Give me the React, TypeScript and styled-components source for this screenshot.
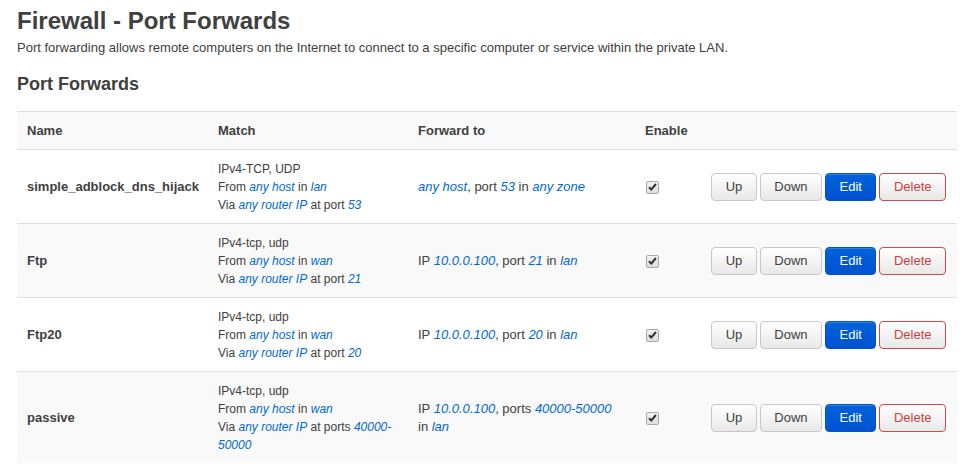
import React from "react";
import styled, { createGlobalStyle } from "styled-components";

const GlobalStyle = createGlobalStyle`
  html, body { margin: 0; padding: 0; background: #fff; }
  body {
    font-family: "Liberation Sans", Arial, Helvetica, sans-serif;
    color: #404040;
    font-size: 13px;
  }
`;

const Page = styled.div`
  width: 940px;
  padding: 0 10px 0 17px;
`;

const Title = styled.h2`
  margin: 0;
  padding-top: 6px;
  font-size: 24px;
  line-height: 30px;
  font-weight: bold;
  color: #404040;
`;

const Description = styled.p`
  margin: 0;
  padding-top: 3px;
  font-size: 13px;
  line-height: 18px;
`;

const Section = styled.h3`
  margin: 0;
  padding-top: 15px;
  font-size: 18px;
  line-height: 24px;
  font-weight: bold;
  color: #404040;
`;

const Table = styled.div`
  margin-top: 15px;
  display: flex;
  flex-direction: column;
`;

const Row = styled.div<{ $shade?: boolean }>`
  display: grid;
  grid-template-columns: 191px 200px 227px 65px 1fr;
  border-top: 1px solid #ddd;
  background: ${(p) => (p.$shade ? "#f9f9f9" : "#fff")};
`;

const HeadCell = styled.div`
  padding: 10px 10px 9px;
  font-size: 13px;
  line-height: 18px;
  font-weight: bold;
  color: #404040;
`;

const Cell = styled.div<{ $narrow?: boolean; $pr?: number }>`
  padding: 10px ${(p) => p.$pr ?? 10}px 9px 10px;
  display: flex;
  align-items: center;
  font-size: ${(p) => (p.$narrow ? "12px" : "13px")};
  line-height: 18px;
  color: #404040;
`;

const NameCell = styled(Cell)`
  font-weight: bold;
`;

const Lines = styled.div`
  display: flex;
  flex-direction: column;
`;

const Val = styled.i`
  color: #0069d6;
`;

const Check = styled.span`
  width: 11px;
  height: 11px;
  margin-left: 1px;
  border: 1px solid #a9a9a9;
  border-radius: 2px;
  background: linear-gradient(#f2f2f2, #dedede);
  display: flex;
  align-items: center;
  justify-content: center;
`;

const Actions = styled.div`
  padding: 0 11px 0 10px;
  display: flex;
  align-items: center;
  justify-content: flex-end;
  gap: 3px;
`;

type Kind = "plain" | "edit" | "remove";

const Button = styled.button<{ $kind: Kind }>`
  height: 28px;
  padding: 0 13.5px;
  border-radius: 4px;
  font-family: "Liberation Sans", Arial, sans-serif;
  font-size: 13px;
  line-height: 26px;
  cursor: pointer;
  border: 1px solid
    ${(p) =>
      p.$kind === "edit" ? "#0054cc" : p.$kind === "remove" ? "#cf4a4a" : "#c8c8c8"};
  color: ${(p) =>
    p.$kind === "edit" ? "#fff" : p.$kind === "remove" ? "#cf3e3e" : "#404040"};
  background: ${(p) =>
    p.$kind === "edit"
      ? "linear-gradient(#0062da, #0052d0)"
      : "linear-gradient(#ffffff, #e8e8e8)"};
  box-shadow: inset 0 1px 0 rgba(255, 255, 255, 0.2);
`;

const CheckMark = () => (
  <Check>
    <svg width="9" height="8" viewBox="0 0 9 8">
      <path d="M1 4.2 L3.3 6.5 L8 1" fill="none" stroke="#333" strokeWidth="2" />
    </svg>
  </Check>
);

type Entry = {
  name: string;
  proto: string;
  src: string;
  port: string;
  plural?: boolean;
  forward: React.ReactNode;
  pr?: number;
};

const entries: Entry[] = [
  {
    name: "simple_adblock_dns_hijack",
    proto: "IPv4-TCP, UDP",
    src: "lan",
    port: "53",
    forward: (
      <span>
        <Val>any host</Val>, port <Val>53</Val> in <Val>any zone</Val>
      </span>
    ),
  },
  {
    name: "Ftp",
    proto: "IPv4-tcp, udp",
    src: "wan",
    port: "21",
    forward: (
      <span>
        IP <Val>10.0.0.100</Val>, port <Val>21</Val> in <Val>lan</Val>
      </span>
    ),
  },
  {
    name: "Ftp20",
    proto: "IPv4-tcp, udp",
    src: "wan",
    port: "20",
    forward: (
      <span>
        IP <Val>10.0.0.100</Val>, port <Val>20</Val> in <Val>lan</Val>
      </span>
    ),
  },
  {
    name: "passive",
    proto: "IPv4-tcp, udp",
    src: "wan",
    port: "40000-50000",
    plural: true,
    pr: 13,
    forward: (
      <span>
        IP <Val>10.0.0.100</Val>, ports <Val>40000-50000</Val> in <Val>lan</Val>
      </span>
    ),
  },
];

const PortValue = ({ port }: { port: string }) => {
  const idx = port.indexOf("-");
  if (idx < 0) return <Val>{port}</Val>;
  return (
    <>
      <Val>{port.slice(0, idx + 1)}</Val>
      <Val>{port.slice(idx + 1)}</Val>
    </>
  );
};

export default function App() {
  return (
    <Page>
      <GlobalStyle />
      <Title>Firewall - Port Forwards</Title>
      <Description>
        Port forwarding allows remote computers on the Internet to connect to a specific
        computer or service within the private LAN.
      </Description>
      <Section>Port Forwards</Section>
      <Table>
        <Row $shade>
          <HeadCell>Name</HeadCell>
          <HeadCell>Match</HeadCell>
          <HeadCell>Forward to</HeadCell>
          <HeadCell>Enable</HeadCell>
          <HeadCell />
        </Row>
        {entries.map((e, i) => (
          <Row key={e.name} $shade={i % 2 === 1}>
            <NameCell>{e.name}</NameCell>
            <Cell $narrow>
              <Lines>
                <span>{e.proto}</span>
                <span>
                  From <Val>any host</Val> in <Val>{e.src}</Val>
                </span>
                <span>
                  Via <Val>any router IP</Val> at {e.plural ? "ports" : "port"}{" "}
                  <PortValue port={e.port} />
                </span>
              </Lines>
            </Cell>
            <Cell $pr={e.pr}>{e.forward}</Cell>
            <Cell>
              <CheckMark />
            </Cell>
            <Actions>
              <Button $kind="plain">Up</Button>
              <Button $kind="plain">Down</Button>
              <Button $kind="edit">Edit</Button>
              <Button $kind="remove">Delete</Button>
            </Actions>
          </Row>
        ))}
      </Table>
    </Page>
  );
}
